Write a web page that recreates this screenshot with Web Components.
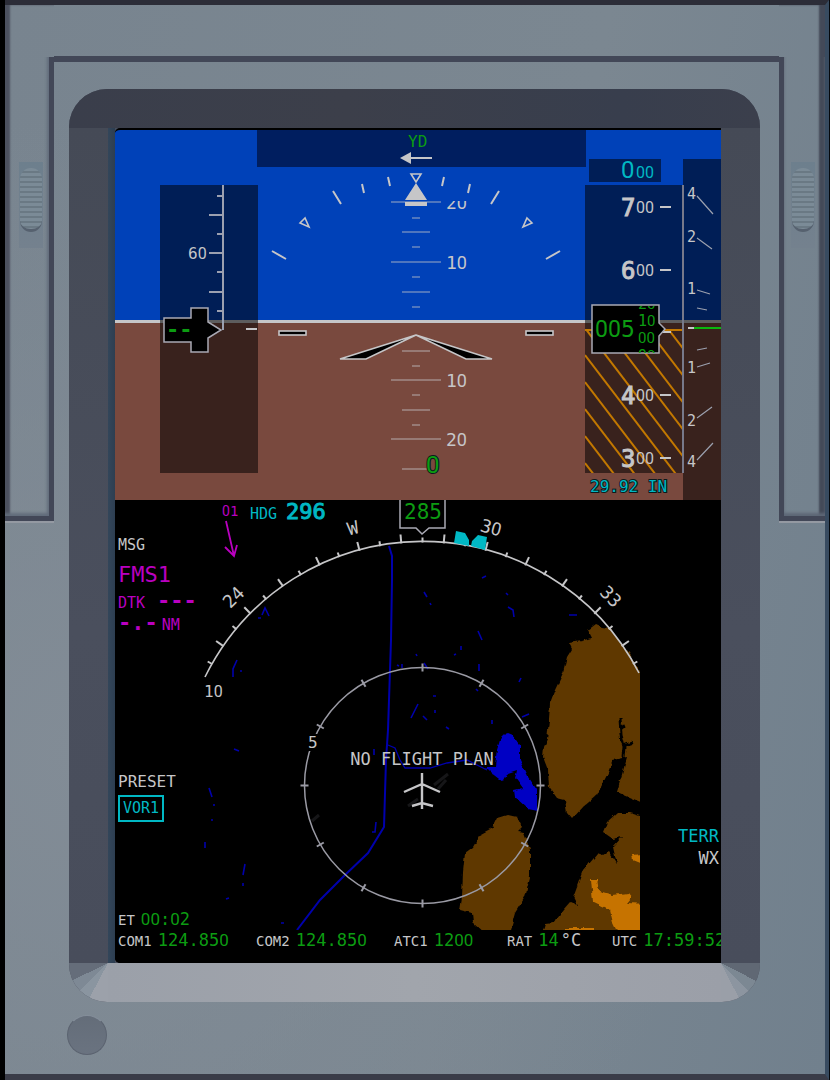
<!DOCTYPE html>
<html lang="en">
<head>
<meta charset="utf-8">
<meta name="viewport" content="width=device-width, initial-scale=1">
<title>Primary Flight Display</title>
<style>
  :root {
    --white: #c6c6c8;
    --green: #0c9c12;
    --cyan: #00b8c4;
    --magenta: #ba00c0;
    --amber: #c27800;
  }
  body { margin: 0; background: #000; color: var(--white); font-family: "DejaVu Sans Mono", "Liberation Mono", monospace; }
</style>
</head>
<body>
<display-case>
  <flight-instrument></flight-instrument>
  <nav-display></nav-display>
</display-case>

<script>
/* The avionics face has a plain, open zero: set it in Roboto, the rest in mono. */
const open0 = tag => s => String(s).replace(/0/g, `<${tag} class="z">0</${tag}>`);
const html0 = open0('span');
const svg0 = open0('tspan');
const ZERO = '.z{font-family:Roboto,"Liberation Sans",sans-serif}';
const txt = (x, y, size, s, extra = '') => `<text x="${x}" y="${y}" font-size="${size}" ${extra}>${svg0(s)}</text>`;
const line = (x1, y1, x2, y2, extra = '') => `<line x1="${x1}" y1="${y1}" x2="${x2}" y2="${y2}" ${extra}/>`;

class BaseElement extends HTMLElement {
  connectedCallback() {
    if (!this.shadowRoot) this.attachShadow({ mode: 'open' }).innerHTML = this.render();
  }
}

/* Knurled latch on each side rail */
customElements.define('side-latch', class extends BaseElement {
  render() {
    return `<style>
      :host { display: block; width: 24px; height: 86px; padding-top: 6px; box-sizing: border-box; background: linear-gradient(#6d7f8d, #74818e); }
      .grip { height: 64px; margin: 0 1px; box-sizing: border-box; border-radius: 11px; border-bottom: 3px solid #56616f;
        background: repeating-linear-gradient(#7b8b97 0 3px, #6a7984 3px 5px); }
    </style><div class="grip"></div>`;
  }
});

/* Machined groove running down the case side */
customElements.define('side-rail', class extends BaseElement {
  render() {
    return `<style>
      :host { display: flex; flex-direction: column; height: 516px; border-bottom: 2px solid #9499a2; }
      .cap { height: 52px; }
      .groove { flex: 1; display: flex; justify-content: center; border: 0 solid #424757; border-bottom-width: 5px; padding-top: 105px; box-sizing: border-box;
        box-shadow: inset 0 -3px 3px #5d6776; }
      :host([side="left"]) { box-shadow: inset 5px 0 2px #4c515f; }
      :host([side="left"]) .groove { border-right-width: 5px; padding-left: 8px; box-shadow: inset -2px -3px 3px #626c7b; }
      :host([side="right"]) { box-shadow: inset -6px 0 2px #434958; }
      :host([side="right"]) .groove { border-left-width: 5px; padding-right: 4px; }
    </style><div class="cap"></div><div class="groove"><slot></slot></div>`;
  }
});

/* Bevelled opening round the glass */
customElements.define('screen-bezel', class extends BaseElement {
  render() {
    return `<style>
      :host { display: grid; grid-template: 39px auto 39px / 39px 7px 1fr 39px; border-radius: 38px; overflow: hidden; background: #474c5a; }
      .top { grid-column: 1 / -1; background: linear-gradient(90deg, #3a3e4b, #3c3f4a 40%, #383e4d 80%, #3b3f4c); }
      .side { background: linear-gradient(#454a56, #4a4f5d 60%, #484d5b); }
      .edge { background: linear-gradient(90deg, #33465a, #2d3e51); }
      .glass { background: #000; border-top: 2px solid #000; border-radius: 5px 0 0 5px; overflow: hidden; min-width: 0; }
      .sill { grid-column: 2 / 4; background: linear-gradient(90deg, #9ba0a9, #a1a5ac 50%, #9b9fa8); }
      .bl { background: conic-gradient(from 180deg at 100% 0, #9ca1aa 28deg, #8a95a0 28deg 45deg, #7e8995 45deg 64deg, #656d7a 64deg); }
      .br { background: conic-gradient(from 90deg at 0 0, #606874 27deg, #7c8893 27deg 46deg, #8c95a0 46deg 63deg, #9a9fa8 63deg); }
    </style>
    <div class="top"></div>
    <div class="side"></div><div class="edge"></div><div class="glass"><slot></slot></div><div class="side"></div>
    <div class="bl"></div><div class="sill"></div><div class="br"></div>`;
  }
});

customElements.define('display-case', class extends BaseElement {
  render() {
    return `<style>
      :host { display: block; box-sizing: border-box; min-height: 100vh; border-left: 5px solid #000; border-right: 1px solid #05080c; background: #7b8791; }
      .case { box-sizing: border-box; min-height: 100vh; border-top: 5px solid #2c2d38; border-bottom: 6px solid #3a3c48; border-right: 4px solid #384b60;
        display: grid; grid-template: auto 1fr / 49px 1fr 46px; align-items: start;
        background: radial-gradient(ellipse at 10% 70%, #828c96, transparent 60%), linear-gradient(100deg, #78848f, #7b8791 60%, #71808d); }
      .middle { margin-top: 51px; border-top: 6px solid #424757; padding: 27px 19px 0 15px; min-width: 0; }
      .foot { grid-column: 1 / -1; padding: 13px 0 0 62px; }
      button { display: block; width: 40px; height: 40px; padding: 0; border: 1px solid #5b6370; border-top-color: #848e9a; border-radius: 50%; background: linear-gradient(#646d79, #6a7380); }
    </style>
    <div class="case">
      <side-rail side="left"><side-latch></side-latch></side-rail>
      <div class="middle"><screen-bezel><slot></slot></screen-bezel></div>
      <side-rail side="right"><side-latch></side-latch></side-rail>
      <div class="foot"><button type="button" aria-label="Bezel button"></button></div>
    </div>`;
  }
});

/* Attitude, airspeed, altitude and vertical speed */
customElements.define('flight-instrument', class extends BaseElement {
  ladder() {
    const half = { l: 25, m: 14, s: 4 };
    return [[202, 'l'], [218, 's'], [232, 'm'], [247, 's'], [262, 'l'], [277, 's'], [292, 'm'], [307, 's'],
      [351, 'm'], [366, 's'], [380, 'l'], [395, 's'], [410, 'm'], [425, 's'], [439, 'l'], [469, 'm']]
      .map(([y, k]) => line(416 - half[k], y, 416 + half[k], y)).join('');
  }
  hatch() {
    let out = '';
    for (let k = -5; k < 5; k++) out += line(585, 355 + k * 27, 685, 486 + k * 27);
    return out;
  }
  altitudes() {
    return [[7, 207], [6, 270], [4, 395], [3, 458]].map(([n, y]) =>
      txt(621, y + 9, 24, n, 'class="strong"') + txt(636, y + 6, 16, '00') + line(660, y, 671, y, 'stroke="#c6c6c8" stroke-width="2"')).join('');
  }
  render() {
    const roll = `<path d="M272 251L286 259M333 191L341 204M362 184L364 193M388 177L390 186" stroke-width="2"/><path d="M305 218L300 223L309 227Z" stroke-width="1.6"/>`;
    return `<style>
      :host { display: block; }
      svg { display: block; width: 100%; height: auto; font-family: "DejaVu Sans Mono", "Liberation Mono", monospace; fill: var(--white); }
      ${ZERO}
      .outlined { paint-order: stroke; stroke: #0a1a1c; stroke-width: 2px; }
      .strong { stroke: var(--white); stroke-width: 1px; }
    </style>
    <svg viewBox="115 130 606 370" role="img" aria-label="Attitude display">
      <defs>
        <clipPath id="drum"><rect x="594" y="306" width="64" height="47"/></clipPath>
        <clipPath id="ground"><rect x="585" y="329" width="98" height="144"/></clipPath>
        <clipPath id="below"><rect x="440" y="201" width="40" height="12"/></clipPath>
      </defs>
      <rect x="115" y="130" width="606" height="191" fill="#0041b8"/>
      <rect x="115" y="321" width="606" height="179" fill="#79493e"/>
      <rect x="115" y="320" width="606" height="3"/>
      <rect x="257" y="130" width="329" height="37" fill="#001e5f"/>
      <g fill="#000" fill-opacity=".53">
        <rect x="160" y="185" width="98" height="288"/><rect x="585" y="185" width="98" height="288"/>
        <rect x="589" y="159" width="72" height="23"/><rect x="683" y="159" width="38" height="341"/>
      </g>
      ${txt(408, 147, 16, 'YD', 'fill="#0c9c12"')}
      <path d="M400 158L411 152V164Z"/>${line(411, 158, 432, 158, 'stroke="#c6c6c8" stroke-width="2"')}
      <g stroke="#c6c6c8" fill="none">${roll}<g transform="translate(832 0) scale(-1 1)">${roll}</g>
        <g stroke-opacity=".8">${this.ladder()}</g></g>
      <path d="M411 174H421L416 182Z" fill="none" stroke="#c6c6c8" stroke-width="1.6"/>
      <path d="M416 183L427 200H405ZM405 202H427V206H405Z"/>
      <g clip-path="url(#below)">${txt(446, 209, 18, '20')}</g>
      ${txt(446, 269, 18, '10')}${txt(446, 387, 18, '10')}${txt(446, 446, 18, '20')}
      ${txt(426, 473, 24, '0', 'fill="#0c9c12" class="outlined"')}
      <g fill="#000" stroke="#c6c6c8" stroke-width="1.6">
        <path d="M416 335L340 359H366Z"/><path d="M416 335L492 359H466Z"/>
        <rect x="279" y="331" width="27" height="4"/><rect x="526" y="331" width="27" height="4"/>
      </g>

      <g stroke="#9ba0b0" stroke-width="2">
        ${line(223, 185, 223, 330)}
        ${[215, 253, 292].map(y => line(209, y, 223, y)).join('')}
        ${[196, 234, 272, 311].map(y => line(217, y, 223, y)).join('')}
      </g>
      ${txt(188, 259, 16, '60')}
      ${line(246, 329, 257, 329, 'stroke="#c6c6c8" stroke-width="2"')}
      <path d="M164 318H191V308H208V322L221 330L208 338V352H191V342H164Z" fill="#000" stroke="#a9a9b4" stroke-width="1.5"/>
      ${txt(166, 337, 22, '--', 'fill="#0c9c12" font-weight="bold"')}

      ${txt(621, 178, 24, '0', 'fill="#00b8c4"')}${txt(636, 178, 16, '00', 'fill="#00b8c4"')}
      <g clip-path="url(#ground)" stroke="#c27800" stroke-width="2">${this.hatch()}${line(585, 330, 683, 330)}</g>
      ${this.altitudes()}
      ${line(660, 332, 671, 332, 'stroke="#c6c6c8" stroke-width="2"')}
      ${line(683, 185, 683, 473, 'stroke="#77798a" stroke-width="2"')}
      <path d="M592 305H659V323L665 329L659 336V353H592Z" fill="#000" stroke="#a9a9b4" stroke-width="1.5"/>
      <g clip-path="url(#drum)" fill="#0c9c12">
        ${txt(595, 337, 23, '005')}
        ${txt(638, 309, 15, '20')}${txt(638, 326, 15, '10')}${txt(638, 343, 15, '00')}${txt(638, 361, 15, '90')}
      </g>
      ${txt(590, 492, 16, '29.92 IN', 'fill="#00b8c4" class="outlined"')}

      ${[[4, 199], [2, 242], [1, 294], [1, 373], [2, 426], [4, 467]].map(([n, y]) => txt(687, y, 15, n)).join('')}
      <path d="M697 196L713 214M697 238L712 249M697 290L710 294M697 308L707 310M697 350L707 348M697 367L710 363M697 418L712 407M697 460L713 443" stroke="#9ba0ae" stroke-width="1.2"/>
      ${line(688, 328, 695, 328, 'stroke="#c6c6c8" stroke-width="2"')}${line(694, 328, 721, 328, 'stroke="#0ab80f" stroke-width="2"')}
    </svg>`;
  }
});

/* Compass arc, range rings and terrain */
customElements.define('terrain-map', class extends BaseElement {
  spoke(deg, r1, r2) {
    const a = deg * Math.PI / 180, s = Math.sin(a), c = Math.cos(a);
    return line((422.5 + r1 * s).toFixed(1), (785.5 - r1 * c).toFixed(1), (422.5 + r2 * s).toFixed(1), (785.5 - r2 * c).toFixed(1));
  }
  render() {
    let outer = '', inner = '';
    for (let d = -60; d <= 60; d += 5) outer += this.spoke(d, 243, d % 10 ? 252 : 248);
    for (let d = 0; d < 360; d += 30) inner += this.spoke(d, 114, 122);
    const rose = [['24', -45], ['W', -15], ['30', 15], ['33', 45]].map(([s, d]) =>
      `<g transform="rotate(${d} 422.5 785.5)">${txt(422, 525, 18, s, 'text-anchor="middle"')}</g>`).join('');
    return `<style>
      :host { display: block; }
      svg { display: block; width: 100%; height: auto; font-family: "DejaVu Sans Mono", "Liberation Mono", monospace; fill: var(--white); }
      ${ZERO}
    </style>
    <svg viewBox="115 500 606 463" role="img" aria-label="Terrain map">
      <defs>
        <clipPath id="area"><rect x="200" y="540" width="440" height="390"/></clipPath>
        <filter id="coast" x="-5%" y="-5%" width="110%" height="110%">
          <feTurbulence type="fractalNoise" baseFrequency=".14" numOctaves="2" seed="4"/>
          <feDisplacementMap in="SourceGraphic" scale="5" xChannelSelector="R" yChannelSelector="G"/>
        </filter>
      </defs>
      <g clip-path="url(#area)">
        <g filter="url(#coast)">
          <g fill="#5e3700">
            <path d="M596 624L603 627L609 628Q628 650 642 676L650 700V806L617 792L627 757L613 760L607 775L597 795L583 807L572 819L567 813L565 800L557 798L549 787L548 770L543 757L544 747L547 740L549 720L550 703L555 690L563 673L567 657L572 649L569 643L582 641L592 638L588 630Z"/>
            <path d="M508 815L517 817L522 827L517 832L524 833L530 850V877L525 897L515 913L509 935H487L473 922L472 913L460 910L462 897L463 872L465 853L473 847L480 835L493 828L498 818Z"/>
            <path d="M617 813H630L650 819V940H540L545 924L553 923L563 910L570 902L577 905L573 897L583 870L597 853L603 855L608 852L617 865L613 847L622 837L613 839L603 832L607 822Z"/>
          </g>
          <path d="M620 718L621 735L624 747L623 757M624 746L632 743M619 728L626 725" fill="none" stroke="#000" stroke-width="3"/>
          <path d="M591 879H597L599 891L613 895L628 893L632 898L628 903L650 904V940H621L613 923L610 910L593 902ZM632 855L650 853V867L633 860ZM566 928H593V934H566Z" fill="#c67300"/>
          <path d="M507 733L512 735L520 745V760L528 777L537 790V810L527 808L515 797L514 790L523 788L515 777L517 770L508 773L503 782L490 772L485 767L495 767L497 750L500 740Z" fill="#0000c4"/>
        </g>
        <g fill="none" stroke="#0000ac" stroke-width="2">
          <path d="M389 546L392 556V580L391 640L388 730L386 760L384 827L368 853L345 875L320 900L297 930"/>
          <path d="M388 745L395 748L400 760L405 768H430L447 763L467 760L487 770" stroke-width="1.3"/>
          <path d="M376 822L375 832H372M424 592L427 597M430 603L431 605M482 578L486 576M508 607L513 610L514 617M569 615H577M506 593L508 595M478 631L482 640M461 646V650M454 655L456 654M479 664V671M411 718L418 704M423 716L427 720M446 727L449 729M433 696H436M435 710V713M522 717L529 714M492 720V724M519 682L521 678M476 689L478 691M424 663L428 669M402 664V668M416 654L417 656M399 666L397 665M262 615L265 608L269 616M258 618H261M233 677V669L237 660M240 671H242M234 749L239 751M209 788L212 797M214 804V806M211 820H213M205 842V848M243 875L245 864M243 883V886M226 899L229 898M281 923H284M374 749V755" stroke-width="1.6"/>
        </g>
        <path d="M434 785L448 774M438 789L446 780M408 806L418 799M312 821L319 815" fill="none" stroke="#161618" stroke-width="3"/>
      </g>

      <g fill="none" stroke="#9a9aa4" stroke-width="1.5">
        <circle cx="422.5" cy="785.5" r="118"/><g stroke-width="2">${inner}</g>
      </g>
      <rect x="306" y="734" width="14" height="17" fill="#000"/>
      <g fill="none" stroke="#c6c6c8" stroke-width="2">
        <path d="M205 677A243 243 0 0 1 639 673" stroke-width="1.6"/>${outer}
        <path d="M400 500V528H416L422 534L429 528H445V500" fill="#000" stroke="#a9a9b4" stroke-width="1.5"/>
      </g>
      ${rose}
      <path d="M456 531L454 543L469 546L469 540L465 533ZM471 546L472 541L478 535L487 537L485 550Z" fill="#00b8c4"/>
      ${txt(404, 519, 21, '285', 'fill="#0c9c12"')}
      ${txt(222, 516, 14, '01', 'fill="#ba00c0"')}
      <path d="M226 521L234 556M225 547L234 556L237 545" fill="none" stroke="#ba00c0" stroke-width="1.8"/>
      ${txt(204, 697, 16, '10')}${txt(308, 748, 16, '5')}
      ${txt(422, 765, 17, 'NO FLIGHT PLAN', 'text-anchor="middle"')}
      <path d="M422 773V809M404 792L422 784L440 792M412 806L422 803L433 806" fill="none" stroke="#c6c6c8" stroke-width="2.4"/>
    </svg>`;
  }
});

/* One label and value pair on the bottom line */
customElements.define('data-field', class extends BaseElement {
  render() {
    return `<style>
      :host { display: flex; gap: 6px; align-items: baseline; white-space: nowrap; font-size: 14px; line-height: 20px; min-width: 0; }
      .value { font-size: 17px; color: var(--green); }
      .unit { font-size: 17px; margin-left: -4px; }
      ${ZERO}
    </style>
    <span>${html0(this.getAttribute('label'))}</span><span class="value">${html0(this.getAttribute('value'))}</span>${this.hasAttribute('unit') ? `<span class="unit">${this.getAttribute('unit')}</span>` : ''}`;
  }
});

customElements.define('nav-display', class extends BaseElement {
  render() {
    return `<style>
      :host { display: grid; background: #000; }
      terrain-map, .overlay { grid-area: 1 / 1; min-width: 0; }
      .overlay { display: flex; flex-direction: column; }
      .head { display: flex; align-items: baseline; gap: 9px; padding-left: 135px; line-height: 24px; height: 28px; font-size: 15px; color: var(--cyan); box-sizing: border-box; }
      .head span:last-child { font-size: 22px; -webkit-text-stroke: 1px var(--cyan); }
      .body { flex: 1; display: flex; justify-content: space-between; }
      .left { display: flex; flex-direction: column; align-items: flex-start; padding: 7px 0 0 3px; font-size: 15px; line-height: 20px; }
      .right { display: flex; flex-direction: column; justify-content: flex-end; text-align: right; font-size: 17px; line-height: 22px; padding: 0 2px 61px 0; }
      .fms { color: var(--magenta); line-height: 24px; }
      .fms h2 { margin: 6px 0 0; font-size: 22px; font-weight: normal; line-height: 28px; }
      .fms div { display: flex; align-items: baseline; gap: 12px; height: 22px; }
      .fms b { font-size: 22px; }
      .fms div:last-child { gap: 4px; }
      .preset { margin-top: auto; font-size: 16px; }
      button { font: 15px/23px "DejaVu Sans Mono", "Liberation Mono", monospace; margin: 3px 0 87px; padding: 0 3px; border: 2px solid var(--cyan); background: #000; color: var(--cyan); }
      .terr { color: var(--cyan); }
      .foot { display: grid; grid-template-columns: 138fr 138fr 113fr 105fr 109fr; padding: 0 0 12px 3px; overflow: hidden; }
      ${ZERO}
    </style>
    <terrain-map></terrain-map>
    <div class="overlay">
      <div class="head"><span>HDG</span><span>296</span></div>
      <div class="body">
        <div class="left">
          <div>MSG</div>
          <div class="fms"><h2>FMS1</h2><div><span>DTK</span><b>---</b></div><div><b>-.-</b><span>NM</span></div></div>
          <div class="preset">PRESET</div>
          <button type="button">VOR1</button>
          <data-field label="ET" value="00:02"></data-field>
        </div>
        <div class="right"><div class="terr">TERR</div><div>WX</div></div>
      </div>
      <div class="foot">
        <data-field label="COM1" value="124.850"></data-field>
        <data-field label="COM2" value="124.850"></data-field>
        <data-field label="ATC1" value="1200"></data-field>
        <data-field label="RAT" value="14" unit="°C"></data-field>
        <data-field label="UTC" value="17:59:52"></data-field>
      </div>
    </div>`;
  }
});
</script>
</body>
</html>
